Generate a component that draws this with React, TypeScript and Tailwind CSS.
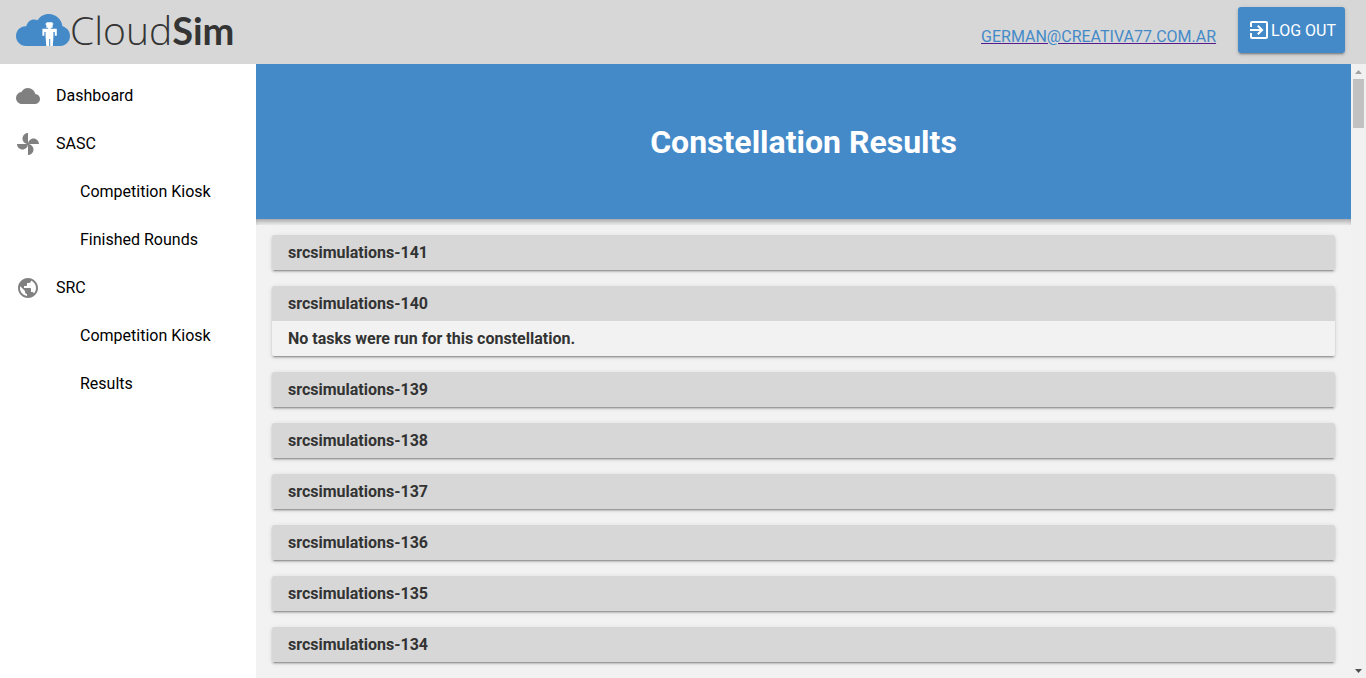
import { MdCloud, MdExitToApp, MdPublic } from "react-icons/md";

const constellations = [
  { name: "srcsimulations-141" },
  { name: "srcsimulations-140", message: "No tasks were run for this constellation." },
  { name: "srcsimulations-139" },
  { name: "srcsimulations-138" },
  { name: "srcsimulations-137" },
  { name: "srcsimulations-136" },
  { name: "srcsimulations-135" },
  { name: "srcsimulations-134" },
];

function FanIcon() {
  return (
    <svg viewBox="0 0 24 24" className="size-6" fill="currentColor" aria-hidden="true">
      <path d="M12 12c0-3 2.5-5.5 5.5-5.5S23 9 23 12H12zm0 0c0 3-2.5 5.5-5.5 5.5S1 15 1 12h11zm0 0c-3 0-5.5-2.5-5.5-5.5S9 1 12 1v11zm0 0c3 0 5.5 2.5 5.5 5.5S15 23 12 23V12z" />
    </svg>
  );
}

const navigation = [
  { label: "Dashboard", icon: <MdCloud className="size-6" />, children: [] },
  { label: "SASC", icon: <FanIcon />, children: ["Competition Kiosk", "Finished Rounds"] },
  { label: "SRC", icon: <MdPublic className="size-6" />, children: ["Competition Kiosk", "Results"] },
];

function Logo() {
  return (
    <a href="#" className="flex items-center text-[#343434]">
      <svg viewBox="0 0 54 32" className="h-8 w-[54px]" aria-hidden="true">
        <path
          fill="#448ac9"
          d="M10 32C4.400 32 0 27.600 0 22C0 16.200 4.600 11.800 10.300 12.200C11.300 8 14.500 5.400 18 5.400C19.300 5.400 20.500 5.700 21.600 6.300C23.800 2.300 28 0 32.700 0C39.700 0 45.600 5 46.400 12.200C51 13.400 54 17.400 54 22C54 27.600 49.600 32 44 32Z"
        />
        <path
          fill="#fff"
          d="M30.600 8.300H36.400V9.300H37.200V10.800H36.600V13.800H34.800V14.800H40.800V21.800H38.800V18H37.400V23L36.800 32H34.200V25H33.200V32H30.300L29.600 23V18H28.400V21.800H26.400V14.800H32.200V13.800H30.300V10.800H29.600V9.300H30.600Z"
        />
      </svg>
      <span className="flex items-baseline leading-[46px]">
        <span className="font-['Open_Sans',sans-serif] text-[39px] font-light">Cloud</span>
        <span className="font-['Lato',sans-serif] text-[38px] font-bold">Sim</span>
      </span>
    </a>
  );
}

function Scrollbar() {
  return (
    <div className="flex w-[15px] shrink-0 flex-col items-center bg-[#f1f1f1]" aria-hidden="true">
      <div className="flex h-[15px] items-center">
        <svg viewBox="0 0 7 4" className="h-1 w-[7px]" fill="#a3a3a3">
          <path d="M0 4L3.500 0L7 4Z" />
        </svg>
      </div>
      <div className="h-[49px] w-[11px] bg-[#c1c1c1]" />
      <div className="mt-auto flex h-[15px] items-center">
        <svg viewBox="0 0 7 4" className="h-1 w-[7px]" fill="#505050">
          <path d="M0 0L3.500 4L7 0Z" />
        </svg>
      </div>
    </div>
  );
}

export default function App() {
  return (
    <div className="flex h-screen flex-col overflow-hidden bg-white font-['Roboto',sans-serif] text-base text-[#212121]">
      <header className="flex h-16 shrink-0 items-center justify-between bg-[#d7d7d7] pr-[21px] pb-1 pl-4">
        <Logo />
        <div className="flex items-center gap-[22px]">
          <a
            href="#"
            className="mt-3.5 text-[#448ac9] underline decoration-[#551a8b]"
          >
            GERMAN@CREATIVA77.COM.AR
          </a>
          <button
            type="button"
            className="flex h-[46px] items-center rounded-[3px] bg-[#448ac9] px-[9px] text-white shadow-[0_2px_2px_0_rgba(0,0,0,0.14),0_1px_5px_0_rgba(0,0,0,0.12),0_3px_1px_-2px_rgba(0,0,0,0.2)]"
          >
            <MdExitToApp className="size-6" />
            <span className="pt-0.5">LOG OUT</span>
          </button>
        </div>
      </header>

      <div className="flex min-h-0 flex-1">
        <nav className="w-64 shrink-0 pt-2 text-black">
          <ul>
            {navigation.map((item) => (
              <li key={item.label}>
                <a href="#" className="flex h-12 items-center gap-4 px-4">
                  <span className="text-[#808080]">{item.icon}</span>
                  {item.label}
                </a>
                <ul>
                  {item.children.map((child) => (
                    <li key={child}>
                      <a href="#" className="flex h-12 items-center pl-20">
                        {child}
                      </a>
                    </li>
                  ))}
                </ul>
              </li>
            ))}
          </ul>
        </nav>

        <main className="min-w-0 flex-1 overflow-hidden bg-[#f2f2f2]">
          <div className="flex h-[155px] items-center justify-center bg-[#448ac9]">
            <h1 className="text-[32px] leading-10 font-bold text-white">Constellation Results</h1>
          </div>
          <div className="h-1.5 shadow-[inset_0_5px_6px_-3px_rgba(0,0,0,0.4)]" />
          <div className="flex flex-col gap-4 px-4 pt-2.5 pb-4">
            {constellations.map((item) => (
              <section
                key={item.name}
                className="overflow-hidden rounded-[2px] leading-[19px] font-bold text-[#333333] shadow-[0_2px_2px_0_rgba(0,0,0,0.14),0_1px_5px_0_rgba(0,0,0,0.12),0_3px_1px_-2px_rgba(0,0,0,0.2)]"
              >
                <h2 className="bg-[#d7d7d7] px-4 py-2">{item.name}</h2>
                {item.message && <p className="px-4 py-2">{item.message}</p>}
              </section>
            ))}
          </div>
        </main>
        <Scrollbar />
      </div>
    </div>
  );
}
